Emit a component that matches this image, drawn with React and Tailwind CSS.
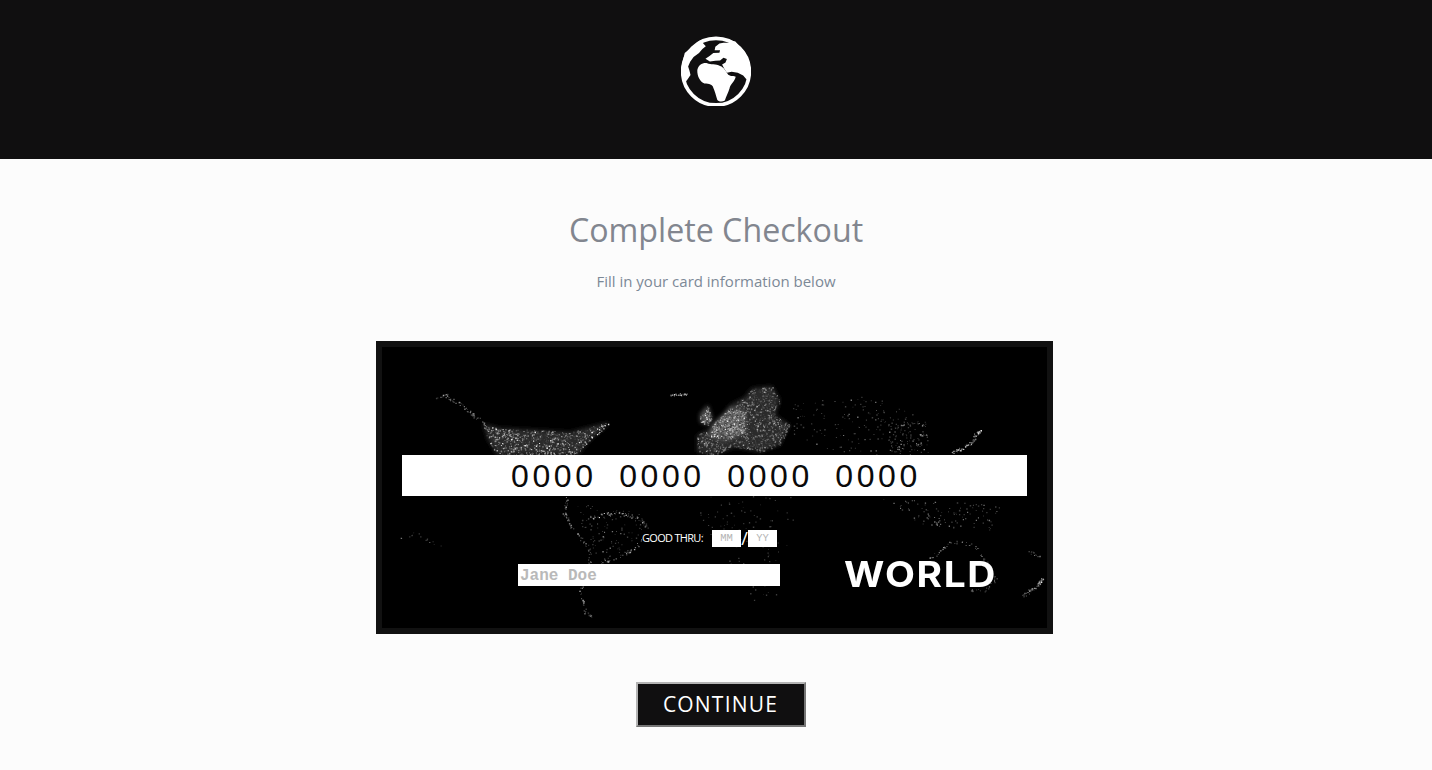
import React from "react";

function rng(seed) {
  let s = seed;
  return () => {
    s = (s * 1664525 + 1013904223) % 4294967296;
    return s / 4294967296;
  };
}

const P = (x, y) => [x - 376, y - 341];

const usa = [[483, 424], [500, 428], [540, 430], [570, 432], [585, 428], [610, 422], [600, 432], [590, 440], [578, 455], [497, 455], [488, 440]];
const europe = [[697, 435], [718, 425], [730, 405], [745, 397], [752, 388], [772, 386], [780, 400], [775, 415], [790, 425], [780, 445], [760, 452], [735, 447], [715, 455], [697, 452]];
const europeCore = [[712, 425], [730, 408], [745, 412], [745, 432], [725, 440], [710, 436]];
const britain = [[700, 414], [708, 405], [712, 418], [708, 425], [700, 422]];

// Land masses: polygon (page coords), number of dots, brightness bias
const lands = [
  [usa, 850, 1],
  [europe, 1300, 0.82],
  [europeCore, 600, 1],
  [britain, 90, 1],
  [[[790, 400], [860, 395], [900, 405], [930, 425], [925, 455], [860, 455], [810, 445], [780, 425]], 170, 0.55],
  [[[885, 425], [925, 420], [930, 452], [890, 452]], 90, 0.85],
  [[[700, 496], [800, 496], [790, 530], [775, 600], [745, 600], [725, 550], [695, 530]], 110, 0.45],
  [[[880, 497], [1000, 505], [990, 530], [920, 525]], 110, 0.7],
  [[[575, 500], [640, 512], [645, 530], [610, 560], [590, 555]], 100, 0.55],
];
const lines = [
  [[[436, 398], [446, 395], [452, 400], [462, 404], [472, 414], [484, 423]], 60, 0.8],
  [[[567, 497], [564, 512], [572, 528], [589, 548], [590, 570], [580, 590], [585, 612], [592, 617]], 120, 0.85],
  [[[587, 518], [615, 512], [640, 518], [648, 530], [635, 548], [620, 556], [600, 563]], 110, 1],
  [[[952, 452], [962, 448], [972, 442], [976, 433], [981, 431]], 85, 1],
  [[[925, 560], [940, 552], [950, 541], [975, 545], [985, 560], [996, 578], [985, 590], [960, 590]], 70, 0.9],
  [[[1021, 598], [1030, 590], [1038, 585], [1042, 579]], 60, 1],
  [[[1018, 545], [1042, 558]], 12, 0.8],
  [[[395, 540], [415, 533], [440, 547]], 14, 0.5],
  [[[670, 395], [686, 394]], 26, 1],
];

function inside(pt, poly) {
  let c = false;
  for (let i = 0, j = poly.length - 1; i < poly.length; j = i++) {
    const a = poly[i];
    const b = poly[j];
    if (a[1] > pt[1] !== b[1] > pt[1] && pt[0] < ((b[0] - a[0]) * (pt[1] - a[1])) / (b[1] - a[1]) + a[0]) c = !c;
  }
  return c;
}

function makeDots() {
  const r = rng(1234);
  const groups = [[], [], [], []];
  const push = (x, y, bias) => {
    const [cx, cy] = P(x, y);
    const v = r() * bias;
    const g = v < 0.45 ? 0 : v < 0.75 ? 1 : v < 0.93 ? 2 : 3;
    const s = 0.7 + r() * 0.8;
    groups[g].push(`M${cx.toFixed(1)} ${cy.toFixed(1)}h${s.toFixed(1)}v${s.toFixed(1)}h-${s.toFixed(1)}z`);
  };
  for (const [poly, n, bias] of lands) {
    const xs = poly.map((p) => p[0]);
    const ys = poly.map((p) => p[1]);
    const x0 = Math.min(...xs);
    const x1 = Math.max(...xs);
    const y0 = Math.min(...ys);
    const y1 = Math.max(...ys);
    let placed = 0;
    let tries = 0;
    while (placed < n && tries < n * 20) {
      tries++;
      const pt = [x0 + r() * (x1 - x0), y0 + r() * (y1 - y0)];
      if (inside(pt, poly)) {
        push(pt[0], pt[1], bias);
        placed++;
      }
    }
  }
  for (const [pts, n, bias] of lines) {
    for (let i = 0; i < n; i++) {
      const t = r() * (pts.length - 1);
      const k = Math.floor(t);
      const f = t - k;
      push(
        pts[k][0] + (pts[k + 1][0] - pts[k][0]) * f + (r() - 0.5) * 3,
        pts[k][1] + (pts[k + 1][1] - pts[k][1]) * f + (r() - 0.5) * 3,
        bias
      );
    }
  }
  return groups.map((g) => g.join(""));
}
const dots = makeDots();
const toPoints = (poly) => poly.map(([x, y]) => P(x, y).join(",")).join(" ");

function NightMap() {
  return (
    <svg className="absolute inset-0 w-full h-full" viewBox="0 0 677 293" aria-hidden="true">
      <defs>
        <filter id="soft"><feGaussianBlur stdDeviation="0.5" /></filter>
        <filter id="wash"><feGaussianBlur stdDeviation="2" /></filter>
      </defs>
      <g filter="url(#wash)">
        <polygon points={toPoints(usa)} fill="#2a2a2a" />
        <polygon points={toPoints(europe)} fill="#2c2c2c" />
        <polygon points={toPoints(europeCore)} fill="#666666" />
        <polygon points={toPoints(britain)} fill="#555555" />
      </g>
      <g filter="url(#soft)">
        <path d={dots[0]} fill="#3d3d3d" />
        <path d={dots[1]} fill="#747474" />
        <path d={dots[2]} fill="#a8a8a8" />
        <path d={dots[3]} fill="#e4e4e4" />
      </g>
    </svg>
  );
}

function Globe() {
  return (
    <svg viewBox="65 50 206 206" className="w-[70px] h-[70px]" aria-label="Globe logo">
      <circle cx="168" cy="155" r="98" fill="none" stroke="#fff" strokeWidth="11" />
      <g fill="#fff">
        <path d="M122 62 C128 70 134 76 138 80 L128 88 L118 100 L102 112 L92 126 L86 140 L90 152 L93 165 L84 178 L76 188 L64 150 L76 100 Z" />
        <path d="M207 62 L206 70 L190 70 L178 72 L166 82 L164 92 L180 92 L178 99 L160 100 L150 108 L137 117 L150 125 L166 123 L180 122 L190 114 L200 118 L196 128 L186 134 L192 146 L200 158 L214 155 L232 158 L248 166 L258 178 L272 150 L255 100 L225 66 Z" />
        <path d="M113 150 C116 136 128 128 142 130 C152 134 168 132 180 138 C192 142 196 152 204 164 C212 170 222 166 226 170 C222 186 210 192 208 204 C204 218 198 228 194 240 C186 244 178 244 172 238 C168 226 164 210 160 202 C158 194 148 190 134 190 C122 186 112 168 113 150 Z" />
      </g>
    </svg>
  );
}

export default function App() {
  return (
    <div className="min-h-[770px] bg-[#fcfcfc] font-['Open_Sans',sans-serif] flex flex-col items-center">
      <header className="w-full h-[159px] bg-[#100f10] flex items-center justify-center pb-[17px]">
        <Globe />
      </header>

      <h1 className="mt-[49px] text-[32.2px] leading-[44px] font-normal text-[#82868f]">Complete Checkout</h1>
      <p className="mt-[16px] text-[15px] leading-[26px] font-normal text-[#7c8997]">Fill in your card information below</p>

      <section className="mt-[47px] mr-[3px] relative w-[677px] h-[293px] bg-black border-[6px] border-[#111111] box-border">
        <div className="absolute -inset-[6px] overflow-hidden">
          <NightMap />
        </div>
        <div className="relative flex flex-col px-[20px] pt-[108px]">
          <input
            readOnly
            placeholder="0000 0000 0000 0000"
            className="w-[625px] h-[41px] bg-white text-center font-['Liberation_Sans',sans-serif] text-[32px] tracking-[3.6px] [word-spacing:10px] outline-none placeholder:text-[#0a0a0a] pl-[3px]"
          />
          <div className="mt-[33px] ml-[240px] flex items-center h-[18px]">
            <span className="w-[70px] text-[11px] font-normal tracking-[-0.7px] text-white whitespace-nowrap">GOOD THRU:</span>
            <input
              readOnly
              placeholder="MM"
              className="w-[29px] h-[17px] bg-white text-center font-['Liberation_Mono',monospace] text-[10.5px] outline-none placeholder:text-[#b4b4b4]"
            />
            <span className="w-[7px] text-center text-white text-[18px] leading-[18px]">/</span>
            <input
              readOnly
              placeholder="YY"
              className="w-[29px] h-[17px] bg-white text-center font-['Liberation_Mono',monospace] text-[10.5px] outline-none placeholder:text-[#b4b4b4]"
            />
          </div>
          <div className="mt-[17px] ml-[116px] flex items-center">
            <input
              readOnly
              placeholder="Jane Doe"
              className="w-[262px] h-[22px] bg-white px-[2px] pt-[1px] font-['Liberation_Mono',monospace] font-bold text-[16px] outline-none placeholder:text-[#b9b9b9]"
            />
            <span className="ml-[64px] -mt-[3px] origin-left scale-x-[1.08] font-['Inter',sans-serif] font-bold text-[36px] leading-[22px] tracking-[1.5px] text-white">WORLD</span>
          </div>
        </div>
      </section>

      <button className="mt-[48px] ml-[9px] w-[170px] h-[45px] bg-[#100f10] border-2 border-t-[#b4b4b4] border-l-[#b4b4b4] border-r-[#767676] border-b-[#767676] text-white text-[21px] tracking-[1.2px]">
        CONTINUE
      </button>
    </div>
  );
}
